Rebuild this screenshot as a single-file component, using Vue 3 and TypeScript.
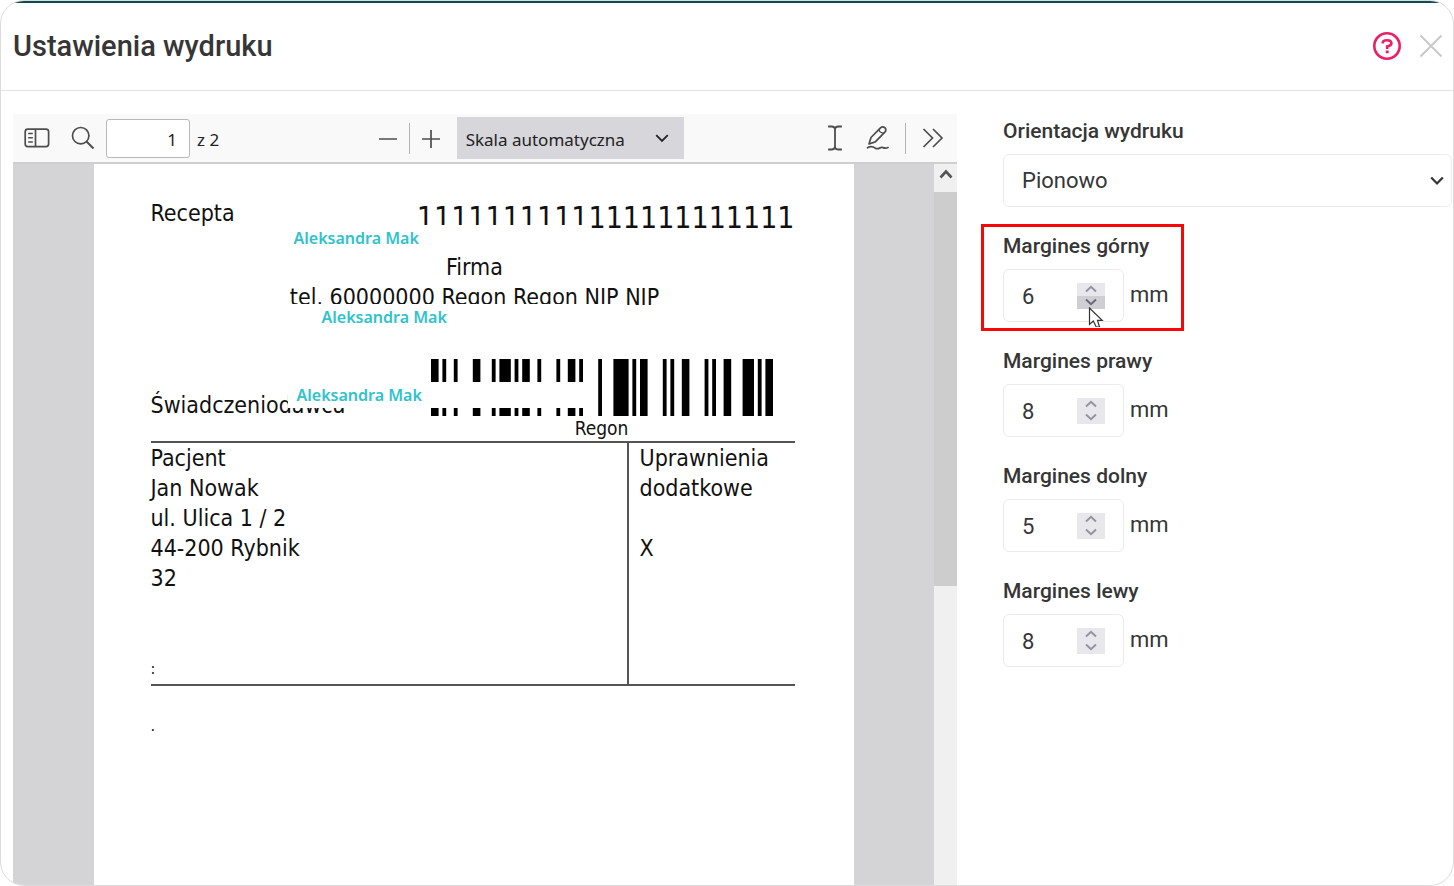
<script setup lang="ts">
import { reactive, ref } from 'vue'

interface Margin {
  id: string
  label: string
  value: number
  active: boolean
}

const orientation = ref('Pionowo')
const pageNumber = ref('1')
const margins = reactive<Margin[]>([
  { id: 'top', label: 'Margines górny', value: 6, active: true },
  { id: 'right', label: 'Margines prawy', value: 8, active: false },
  { id: 'bottom', label: 'Margines dolny', value: 5, active: false },
  { id: 'left', label: 'Margines lewy', value: 8, active: false },
])

// Barcode bars as [start, width] in modules
const bars: [number, number][] = [
  [0, 2], [3, 1], [6, 1], [11, 2], [16, 1], [18, 3], [22, 1], [24, 2], [28, 1],
  [33, 1], [36, 2], [39, 1], [44, 1], [48, 4], [53, 1], [55, 2], [61, 1], [63, 1],
  [66, 2], [72, 1], [74, 1], [77, 2], [82, 3], [86, 1], [88, 2],
]

const patient = ['Pacjent', 'Jan Nowak', 'ul. Ulica 1 / 2', '44-200 Rybnik', '32']
</script>

<template>
  <div class="modal" role="dialog" aria-labelledby="modal-title">
    <header class="modal-head">
      <h1 id="modal-title">Ustawienia wydruku</h1>
      <button type="button" class="icon-btn help" aria-label="Pomoc">
        <svg width="30" height="30" viewBox="0 0 30 30" fill="none" stroke="#ec1f64" stroke-width="2.6">
          <circle cx="15" cy="15" r="12.7" />
          <path d="M10.8 12.4V11.6C10.8 9.8 12.3 9.2 15 9.2S19.4 10 19.4 12.2C19.4 14.6 17.8 14.8 15.2 15.4V18" />
          <path d="M15.2 19.6V22.2" stroke-width="3" />
        </svg>
      </button>
      <button type="button" class="icon-btn close" aria-label="Zamknij">
        <svg width="24" height="24" viewBox="0 0 24 24" fill="none" stroke="#c9c9c9" stroke-width="2">
          <path d="M1.5 1.5L22.5 22.5M22.5 1.5L1.5 22.5" />
        </svg>
      </button>
    </header>

    <main class="modal-body">
      <section class="viewer">
        <div class="toolbar">
          <button type="button" class="icon-btn sidebar" aria-label="Panel boczny">
            <svg width="26" height="20" viewBox="0 0 26 20" fill="none" stroke="#4d4d4d" stroke-width="1.7">
              <rect x="1.2" y="1.2" width="23.4" height="17.4" rx="2.6" />
              <path d="M11.5 1V19" />
              <path d="M4.2 5.5H8.8M4.2 9.7H8.8M4.2 13.9H8.8" stroke-width="1.5" />
            </svg>
          </button>
          <button type="button" class="icon-btn search" aria-label="Znajdź">
            <svg width="24" height="24" viewBox="0 0 24 24" fill="none" stroke="#4d4d4d" stroke-width="1.7">
              <circle cx="9.7" cy="9.7" r="8.2" />
              <path d="M15.5 15.5L22.5 22.5" stroke-width="2" />
            </svg>
          </button>
          <input v-model="pageNumber" class="page-no" type="text" aria-label="Strona" />
          <span class="page-count">z 2</span>
          <span class="grow"></span>
          <button type="button" class="icon-btn" aria-label="Pomniejsz">
            <svg width="20" height="20" viewBox="0 0 20 20" fill="none" stroke="#4d4d4d" stroke-width="1.7">
              <path d="M1 11H19" />
            </svg>
          </button>
          <span class="sep"></span>
          <button type="button" class="icon-btn" aria-label="Powiększ">
            <svg width="20" height="20" viewBox="0 0 20 20" fill="none" stroke="#4d4d4d" stroke-width="1.7">
              <path d="M1 11H19M10 2V20" />
            </svg>
          </button>
          <div class="scale">
            <select aria-label="Skala">
              <option>Skala automatyczna</option>
            </select>
            <svg width="14" height="9" viewBox="0 0 14 9" fill="none" stroke="#222" stroke-width="1.8">
              <path d="M1.2 1.2L7 7L12.8 1.2" />
            </svg>
          </div>
          <span class="grow after"></span>
          <button type="button" class="icon-btn" aria-label="Tekst">
            <svg width="14" height="26" viewBox="0 0 14 26" fill="none" stroke="#4d4d4d" stroke-width="1.8">
              <path d="M1 2.5V1.5H3.5C5.5 1.5 7 2.5 7 4.5V21.5C7 23.5 5.5 24.5 3.5 24.5H1V23.5M13 2.5V1.5H10.5C8.5 1.5 7 2.5 7 4.5M13 23.5V24.5H10.5C8.5 24.5 7 23.5 7 21.5" />
            </svg>
          </button>
          <button type="button" class="icon-btn draw" aria-label="Rysuj">
            <svg width="24" height="26" viewBox="0 0 24 26" fill="none" stroke="#4d4d4d" stroke-width="1.7" stroke-linejoin="round" stroke-linecap="round">
              <path d="M3 19L5 12.5L14.5 2.8Q16.8 .8 19 2.9Q20.8 5 18.8 7.2L9.3 16.9Z" />
              <path d="M13 4.5Q13.5 7.8 17.5 8.2" stroke-width="1.4" />
              <path d="M1.5 22.8C5 20.5 7 21.5 9.5 23.3C12.5 25 14 21.6 17 22.6C19 23.5 20.5 23.3 22 22.5" />
            </svg>
          </button>
          <span class="sep"></span>
          <button type="button" class="icon-btn more" aria-label="Więcej">
            <svg width="22" height="20" viewBox="0 0 22 20" fill="none" stroke="#4d4d4d" stroke-width="1.7">
              <path d="M1.5 1L10.5 10L1.5 19M11 1L20 10L11 19" />
            </svg>
          </button>
        </div>

        <div class="canvas">
          <div class="desk">
            <article class="sheet">
              <div class="rx-title">
                <span>Recepta</span>
                <span class="rx-number">1111111111111111111111</span>
              </div>
              <div class="firm">
                <p>Firma</p>
                <p>tel. 60000000 Regon Regon NIP NIP</p>
              </div>
              <div class="provider">
                <span>Świadczeniodawca</span>
                <figure>
                  <svg width="342" height="57" viewBox="0 0 90 57" preserveAspectRatio="none" fill="#000">
                    <rect v-for="bar in bars" :key="bar[0]" :x="bar[0]" y="0" :width="bar[1]" height="57" />
                  </svg>
                  <figcaption>Regon</figcaption>
                </figure>
              </div>
              <div class="details">
                <div class="patient">
                  <p v-for="line in patient" :key="line">{{ line }}</p>
                  <p class="colon">:</p>
                </div>
                <div class="rights">
                  <p>Uprawnienia</p>
                  <p>dodatkowe</p>
                  <p class="mark">X</p>
                </div>
              </div>
              <p class="dot">.</p>

              <span class="patch patch-a">Aleksandra Mak</span>
              <span class="patch patch-b">Aleksandra Mak</span>
              <span class="patch patch-c">Aleksandra Mak</span>
            </article>
          </div>
          <div class="scrollbar">
            <button type="button" class="icon-btn up" aria-label="Przewiń w górę">
              <svg width="14" height="10" viewBox="0 0 14 10" fill="none" stroke="#555" stroke-width="2.6">
                <path d="M1.5 8.5L7 2.5L12.5 8.5" />
              </svg>
            </button>
            <div class="thumb"></div>
            <div class="track"></div>
          </div>
        </div>
      </section>

      <form class="settings" @submit.prevent>
        <div class="field">
          <label for="orientation">Orientacja wydruku</label>
          <div class="select-wrap">
            <select id="orientation" v-model="orientation">
              <option>Pionowo</option>
              <option>Poziomo</option>
            </select>
            <svg width="14" height="10" viewBox="0 0 14 10" fill="none" stroke="#333" stroke-width="2.2">
              <path d="M1.2 1.5L7 7.5L12.8 1.5" />
            </svg>
          </div>
        </div>
        <div v-for="m in margins" :key="m.id" class="field" :class="{ active: m.active }">
          <label :for="m.id">{{ m.label }}</label>
          <div class="measure">
            <div class="number">
              <input :id="m.id" v-model="m.value" type="number" />
              <div class="spin">
                <button type="button" aria-label="Zwiększ" @click="m.value++">
                  <svg width="12" height="8" viewBox="0 0 12 8" fill="none" stroke="#9593a0" stroke-width="2">
                    <path d="M1 6.5L6 1.8L11 6.5" />
                  </svg>
                </button>
                <button type="button" class="down" aria-label="Zmniejsz" @click="m.value--">
                  <svg width="12" height="8" viewBox="0 0 12 8" fill="none" stroke="currentColor" stroke-width="2">
                    <path d="M1 1.5L6 6.2L11 1.5" />
                  </svg>
                </button>
              </div>
            </div>
            <span class="unit">mm</span>
          </div>
          <svg v-if="m.active" class="pointer" width="16" height="20" viewBox="0 0 16 20">
            <path d="M1.5 1V17.5L5.3 14L8.3 20H11.5L9.5 13.3H14.2Z" fill="#fff" stroke="#333" stroke-width="1.2" />
          </svg>
        </div>
      </form>
    </main>
  </div>
</template>

<style>
body {
  margin: 0;
  background: #fff;
}
</style>

<style scoped>
*,
*::after {
  box-sizing: border-box;
}

h1,
p,
figure {
  margin: 0;
  font-weight: inherit;
}

.modal {
  display: flex;
  flex-direction: column;
  height: 100vh;
  overflow: hidden;
  border: 1px solid #dcdcdc;
  border-radius: 24px;
  background: #fff;
  color: #363636;
  font-family: Roboto, "Liberation Sans", sans-serif;
}

.icon-btn {
  display: flex;
  flex: none;
  align-items: center;
  justify-content: center;
  padding: 0;
  border: 0;
  background: none;
}

.modal-head {
  display: flex;
  flex: none;
  align-items: center;
  height: 90px;
  padding: 0 10px 2px 12px;
  border-top: 2px solid #0f4b4b;
  border-bottom: 1px solid #e4e4e4;
}

h1 {
  flex: 1;
  font-size: 29px;
  font-weight: 500;
  line-height: 36px;
}

.close {
  margin-left: 17px;
}

.modal-body {
  display: flex;
  flex: 1;
  gap: 46px;
  min-height: 0;
  padding: 23px 1px 0 12px;
}

.viewer {
  display: flex;
  flex: 944 1 0;
  flex-direction: column;
  min-width: 0;
}

.toolbar {
  display: flex;
  flex: none;
  align-items: center;
  height: 50px;
  padding: 0 13px 0 11px;
  border-bottom: 2px solid #cfcfd1;
  background: #f9f9fa;
  color: #222;
  font-family: "Noto Sans", "Open Sans", sans-serif;
  font-size: 17px;
}

.search {
  margin-left: 21px;
}

.page-no {
  width: 84px;
  height: 39px;
  margin-left: 11px;
  padding: 2px 12px 0 0;
  border: 1px solid #b9b9bb;
  border-radius: 3px;
  background: #fff;
  color: inherit;
  font: inherit;
  text-align: right;
}

.page-count {
  padding: 3px 0 0 7px;
}

.grow {
  flex: 157 1 0;
}

.grow.after {
  flex-basis: 0;
  flex-grow: 143;
}

.sep {
  width: 1px;
  height: 31px;
  margin: 0 11px;
  background: #b4b4b6;
}

.scale {
  position: relative;
  width: 227px;
  height: 42px;
  margin-left: 16px;
}

.scale select {
  width: 100%;
  height: 100%;
  padding: 2px 40px 0 9px;
  border: 0;
  border-radius: 0;
  appearance: none;
  background: #d7d6db;
  color: inherit;
  font: inherit;
}

.scale svg {
  position: absolute;
  top: 17px;
  right: 15px;
  pointer-events: none;
}

.draw {
  margin: 0 4px 0 24px;
}

.more {
  margin-left: 5px;
}

.canvas {
  display: flex;
  flex: 1;
  min-height: 0;
}

.desk {
  display: flex;
  flex: 1;
  justify-content: center;
  overflow: hidden;
  background: #d4d4d6;
}

.sheet {
  position: relative;
  width: 760px;
  padding: 34px 59px 0 57px;
  background: #fff;
  color: #111;
  font-family: "DejaVu Sans Condensed", "DejaVu Sans", sans-serif;
  font-size: 23px;
  font-stretch: condensed;
  line-height: 30px;
}

.rx-title {
  display: flex;
  justify-content: space-between;
  height: 54px;
}

.rx-number {
  font-size: 30px;
  line-height: 40px;
}

.firm {
  padding-left: 4px;
  text-align: center;
}

.provider {
  display: flex;
  align-items: flex-end;
  justify-content: space-between;
  height: 129px;
  padding-right: 22px;
}

.provider > span {
  margin-bottom: 21px;
}

figure {
  display: flex;
  flex-direction: column;
  align-items: center;
}

figcaption {
  font-size: 19px;
  line-height: 25px;
}

.details {
  display: flex;
  height: 245px;
  border-top: 2px solid #555;
  border-bottom: 2px solid #555;
}

.patient {
  flex: 1;
  border-right: 2px solid #555;
}

.colon {
  margin-top: 61px;
  font-size: 16px;
}

.rights {
  width: 166px;
  padding-left: 11px;
}

.mark {
  margin-top: 30px;
}

.dot {
  margin-top: 30px;
  font-size: 16px;
  line-height: 20px;
}

.patch {
  position: absolute;
  left: 194px;
  height: 26px;
  background: #fff;
  color: #30c3cb;
  font-family: "Noto Sans", "Open Sans", sans-serif;
  font-size: 16px;
  font-weight: 600;
  line-height: 26px;
}

.patch-a {
  top: 61px;
  width: 302px;
  padding-left: 6px;
}

.patch-b {
  top: 140px;
  width: 333px;
  padding-left: 34px;
}

.patch-c {
  top: 218px;
  width: 302px;
  padding-left: 9px;
}

.scrollbar {
  display: flex;
  flex-direction: column;
  width: 23px;
  background: #f0f0f0;
}

.up {
  width: 23px;
  height: 28px;
  padding-bottom: 8px;
}

.thumb {
  flex: 25 1 0;
  background: #cdcdcd;
}

.track {
  flex: 19 1 0;
}

.settings {
  display: flex;
  flex: 449 1 0;
  flex-direction: column;
  gap: 27px;
  min-width: 0;
  padding-top: 5px;
  font-size: 22px;
}

.field {
  position: relative;
  display: flex;
  flex-direction: column;
  gap: 11px;
}

label {
  font-size: 21px;
  font-weight: 500;
  line-height: 24px;
}

.select-wrap {
  position: relative;
}

.select-wrap select {
  display: block;
  width: 100%;
  height: 53px;
  padding: 0 40px 0 18px;
  border: 1px solid #e9ebef;
  border-radius: 6px;
  appearance: none;
  background: #fff;
  color: inherit;
  font: inherit;
}

.select-wrap svg {
  position: absolute;
  top: 22px;
  right: 8px;
  pointer-events: none;
}

.measure {
  display: flex;
  align-items: center;
  gap: 6px;
}

.number {
  display: flex;
  align-items: center;
  width: 121px;
  height: 53px;
  padding: 0 18px;
  border: 1px solid #e9ebef;
  border-radius: 6px;
}

.number input {
  flex: 1;
  width: 0;
  min-width: 0;
  padding: 2px 0 0;
  border: 0;
  outline: 0;
  appearance: textfield;
  background: none;
  color: inherit;
  font: inherit;
}

.number input::-webkit-inner-spin-button {
  display: none;
}

.spin {
  width: 28px;
  background: #e8e7ec;
}

.spin button {
  display: flex;
  align-items: center;
  justify-content: center;
  width: 28px;
  height: 13px;
  padding: 0;
  border: 0;
  background: none;
  color: #9593a0;
}

.active .down {
  background: #cfced5;
  color: #6b6974;
}

.unit {
  padding-bottom: 2px;
  line-height: 26px;
}

.active::after {
  content: "";
  position: absolute;
  top: -10px;
  left: -22px;
  width: 203px;
  height: 107px;
  border: 3px solid #f90606;
  pointer-events: none;
}

.pointer {
  position: absolute;
  top: 73px;
  left: 85px;
}
</style>
